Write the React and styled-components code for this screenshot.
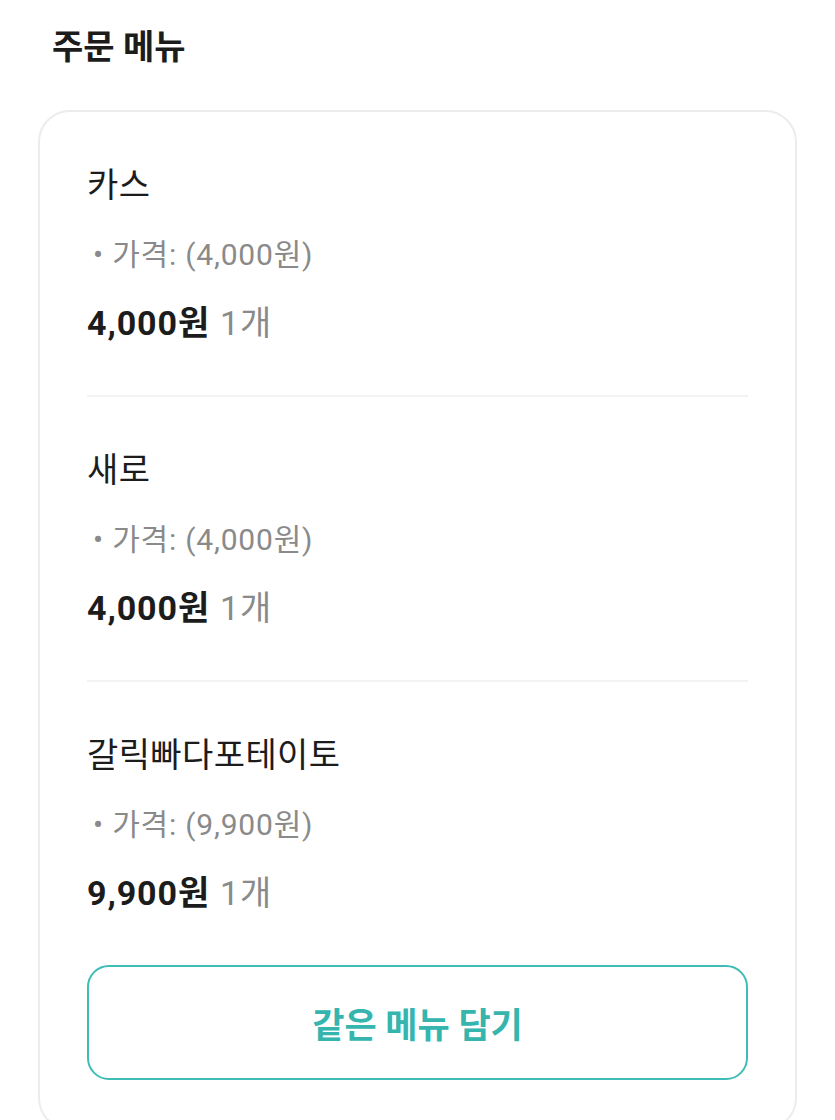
import React from 'react';
import styled, { createGlobalStyle } from 'styled-components';

const GlobalStyle = createGlobalStyle`
  body {
    margin: 0;
    background: #ffffff;
    font-family: "Roboto", "Noto Sans CJK KR", sans-serif;
    color: #1c1c1c;
  }
`

const Page = styled.div`
  padding: 22px 38px 0 38px;
`

const Title = styled.h2`
  margin: 0 0 0 14px;
  font-size: 34px;
  line-height: 50px;
  font-weight: 700;
`

const Card = styled.div`
  margin-top: 38px;
  border: 2px solid #ececec;
  border-radius: 32px;
  padding: 0 47px 48px 47px;
  min-height: 980px;
  box-sizing: border-box;
`

const Item = styled.div`
  padding: 53px 0 52px 0;
  border-bottom: ${p => (p.last ? 'none' : '2px solid #f3f3f3')};
`

const Name = styled.div`
  font-size: 34px;
  line-height: 40px;
  font-weight: 400;
  letter-spacing: 0.4px;
`

const Price = styled.div`
  margin-top: 32px;
  font-size: 30px;
  line-height: 36px;
  letter-spacing: 0.8px;
  color: #8a8a8a;
  padding-left: 6px;
`

const Total = styled.div`
  margin-top: 30px;
  font-size: 34px;
  line-height: 40px;
  font-weight: 700;
  letter-spacing: 0.9px;

  span {
    font-weight: 400;
    color: #8a8a8a;
    margin-left: 10px;
  }
`

const Button = styled.button`
  display: block;
  width: 100%;
  height: 115px;
  margin-top: 0;
  background: #fff;
  border: 2.5px solid #3dbdb5;
  border-radius: 22px;
  color: #35b5ad;
  font-family: "Roboto", "Noto Sans CJK KR", sans-serif;
  font-size: 35px;
  font-weight: 700;
  cursor: pointer;
`

const items = [
  { name: '카스', price: '4,000원', qty: 1 },
  { name: '새로', price: '4,000원', qty: 1 },
  { name: '갈릭빠다포테이토', price: '9,900원', qty: 1 },
]

export default function App() {
  return (
    <Page>
      <GlobalStyle />
      <Title>주문 메뉴</Title>
      <Card>
        {items.map((it, i) => (
          <Item key={it.name} last={i === items.length - 1}>
            <Name>{it.name}</Name>
            <Price>• 가격: ({it.price})</Price>
            <Total>
              {it.price}<span>{it.qty}개</span>
            </Total>
          </Item>
        ))}
        <Button>같은 메뉴 담기</Button>
      </Card>
    </Page>
  )
}
